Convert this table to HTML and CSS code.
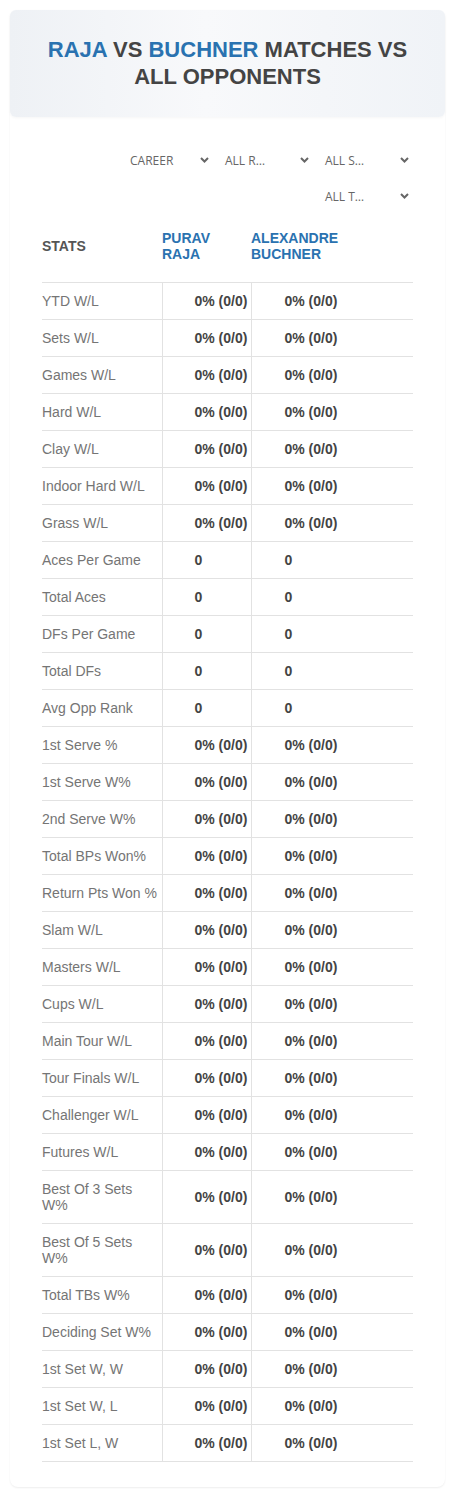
FILE: index.html
```html
<!DOCTYPE html>
<html lang="en">
<head>
<meta charset="utf-8">
<title>Raja vs Buchner</title>
<link rel="stylesheet" href="styles.css">
</head>
<body>
<div class="page">
  <div class="card">
    <div class="hero">
      <h1 class="title"><span class="hl">RAJA</span> VS <span class="hl">BUCHNER</span> MATCHES VS ALL OPPONENTS</h1>
    </div>
    <div class="body">
      <div class="filters">
        <div class="select"><span class="sel-text">CAREER</span><svg class="chev" width="9" height="6" viewBox="0 0 9 6"><polyline points="1,1 4.5,4.5 8,1" fill="none" stroke="#666" stroke-width="2"/></svg></div>
        <div class="select"><span class="sel-text">ALL R…</span><svg class="chev" width="9" height="6" viewBox="0 0 9 6"><polyline points="1,1 4.5,4.5 8,1" fill="none" stroke="#666" stroke-width="2"/></svg></div>
        <div class="select"><span class="sel-text">ALL S…</span><svg class="chev" width="9" height="6" viewBox="0 0 9 6"><polyline points="1,1 4.5,4.5 8,1" fill="none" stroke="#666" stroke-width="2"/></svg></div>
        <div class="select"><span class="sel-text">ALL T…</span><svg class="chev" width="9" height="6" viewBox="0 0 9 6"><polyline points="1,1 4.5,4.5 8,1" fill="none" stroke="#666" stroke-width="2"/></svg></div>
      </div>
      <table class="stats">
        <colgroup><col class="c-label"><col class="c-p1"><col class="c-p2"></colgroup>
        <thead>
          <tr>
            <th class="h-stats">STATS</th>
            <th class="h-player">PURAV<br>RAJA</th>
            <th class="h-player">ALEXANDRE<br>BUCHNER</th>
          </tr>
        </thead>
        <tbody>
          <tr><td>YTD W/L</td><td>0% (0/0)</td><td>0% (0/0)</td></tr>
          <tr><td>Sets W/L</td><td>0% (0/0)</td><td>0% (0/0)</td></tr>
          <tr><td>Games W/L</td><td>0% (0/0)</td><td>0% (0/0)</td></tr>
          <tr><td>Hard W/L</td><td>0% (0/0)</td><td>0% (0/0)</td></tr>
          <tr><td>Clay W/L</td><td>0% (0/0)</td><td>0% (0/0)</td></tr>
          <tr><td>Indoor Hard W/L</td><td>0% (0/0)</td><td>0% (0/0)</td></tr>
          <tr><td>Grass W/L</td><td>0% (0/0)</td><td>0% (0/0)</td></tr>
          <tr><td>Aces Per Game</td><td>0</td><td>0</td></tr>
          <tr><td>Total Aces</td><td>0</td><td>0</td></tr>
          <tr><td>DFs Per Game</td><td>0</td><td>0</td></tr>
          <tr><td>Total DFs</td><td>0</td><td>0</td></tr>
          <tr><td>Avg Opp Rank</td><td>0</td><td>0</td></tr>
          <tr><td>1st Serve %</td><td>0% (0/0)</td><td>0% (0/0)</td></tr>
          <tr><td>1st Serve W%</td><td>0% (0/0)</td><td>0% (0/0)</td></tr>
          <tr><td>2nd Serve W%</td><td>0% (0/0)</td><td>0% (0/0)</td></tr>
          <tr><td>Total BPs Won%</td><td>0% (0/0)</td><td>0% (0/0)</td></tr>
          <tr><td>Return Pts Won %</td><td>0% (0/0)</td><td>0% (0/0)</td></tr>
          <tr><td>Slam W/L</td><td>0% (0/0)</td><td>0% (0/0)</td></tr>
          <tr><td>Masters W/L</td><td>0% (0/0)</td><td>0% (0/0)</td></tr>
          <tr><td>Cups W/L</td><td>0% (0/0)</td><td>0% (0/0)</td></tr>
          <tr><td>Main Tour W/L</td><td>0% (0/0)</td><td>0% (0/0)</td></tr>
          <tr><td>Tour Finals W/L</td><td>0% (0/0)</td><td>0% (0/0)</td></tr>
          <tr><td>Challenger W/L</td><td>0% (0/0)</td><td>0% (0/0)</td></tr>
          <tr><td>Futures W/L</td><td>0% (0/0)</td><td>0% (0/0)</td></tr>
          <tr><td>Best Of 3 Sets W%</td><td>0% (0/0)</td><td>0% (0/0)</td></tr>
          <tr><td>Best Of 5 Sets W%</td><td>0% (0/0)</td><td>0% (0/0)</td></tr>
          <tr><td>Total TBs W%</td><td>0% (0/0)</td><td>0% (0/0)</td></tr>
          <tr><td>Deciding Set W%</td><td>0% (0/0)</td><td>0% (0/0)</td></tr>
          <tr><td>1st Set W, W</td><td>0% (0/0)</td><td>0% (0/0)</td></tr>
          <tr><td>1st Set W, L</td><td>0% (0/0)</td><td>0% (0/0)</td></tr>
          <tr><td>1st Set L, W</td><td>0% (0/0)</td><td>0% (0/0)</td></tr>
        </tbody>
      </table>
    </div>
  </div>
</div>
</body>
</html>
```

FILE: styles.css
```css
* { box-sizing: border-box; }
html, body { margin: 0; padding: 0; background: #fff; }
body { font-family: "Liberation Sans", Arial, sans-serif; color: #444; }

.page { padding: 10px 10px 9px; }

.card {
  border-radius: 8px;
  background: #fff;
  box-shadow: 0 1px 2px rgba(0, 0, 0, 0.07);
}

.hero {
  border-radius: 6px;
  background: linear-gradient(90deg, #eef1f5 0%, #f8f9fb 45%, #f0f3f7 100%);
  box-shadow: 0 1px 3px rgba(0, 0, 0, 0.04);
  padding: 26px 24px 27px;
}

.title {
  margin: 0;
  text-align: center;
  font-size: 22px;
  line-height: 27px;
  font-weight: bold;
  color: #444;
}
.title .hl { color: #2a72b0; }

.body { padding: 31px 32px 25px; }

.filters {
  display: flex;
  flex-wrap: wrap;
  justify-content: flex-end;
  column-gap: 7px;
  row-gap: 12px;
}

.select {
  width: 93px;
  height: 24px;
  display: flex;
  align-items: center;
  justify-content: space-between;
  padding: 0 4px 0 5px;
  font-family: "Open Sans", "Noto Sans", sans-serif;
  font-size: 12px;
  color: #666;
}
.select:first-child { width: 88px; }
.chev { display: block; }

.stats {
  margin-top: 12px;
  width: 371px;
  table-layout: fixed;
  border-collapse: collapse;
}
.c-label { width: 120px; }
.c-p1 { width: 89px; }
.c-p2 { width: 162px; }

.stats th {
  text-align: left;
  vertical-align: middle;
  font-size: 14px;
  line-height: 16px;
  font-weight: bold;
  padding: 10px 0 20px;
  border-bottom: 1px solid #e2e2e2;
}
.h-stats { color: #555; }
.h-player { color: #2a72b0; }

.stats td {
  font-size: 14px;
  line-height: 16px;
  padding: 10px 0 10px;
  border-bottom: 1px solid #e2e2e2;
  vertical-align: middle;
}
.stats td:first-child {
  color: #757575;
  padding-right: 4px;
}
.stats td:nth-child(2),
.stats td:nth-child(3) {
  border-left: 1px solid #e2e2e2;
  font-weight: bold;
  color: #444;
  padding-left: 32px;
}
.stats td:nth-child(3) { padding-left: 33px; }
```
